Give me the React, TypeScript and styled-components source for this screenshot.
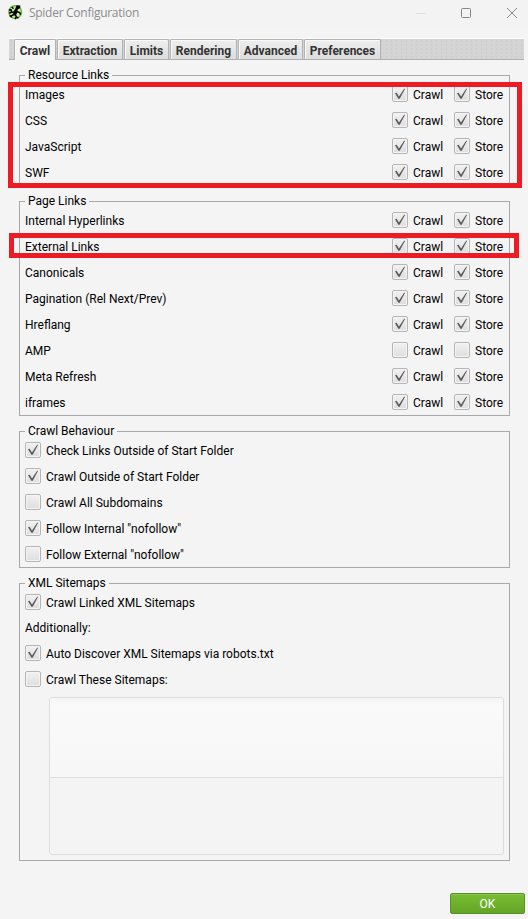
import React from 'react';
import styled, { createGlobalStyle } from 'styled-components';

const GlobalStyle = createGlobalStyle`
  * { box-sizing: border-box; }
  body { margin: 0; background: #f4f4f4; overflow: hidden; }
`;

const Window = styled.div`
  position: relative;
  width: 528px;
  height: 919px;
  display: flex;
  flex-direction: column;
  background: #f4f4f4;
  color: #000;
  font: 12px/14px Roboto, 'Liberation Sans', sans-serif;
  white-space: nowrap;
`;

const TitleBar = styled.header`
  display: flex;
  align-items: center;
  height: 26px;
  padding-left: 7px;
  background: #f3f3f3;
`;

const Title = styled.div`
  flex: 1;
  margin-left: 6px;
  color: #8c8c8c;
  font: 12px/16px 'Open Sans', 'Noto Sans', sans-serif;
  letter-spacing: -0.28px;
`;

const TabStrip = styled.nav`
  display: flex;
  align-items: flex-end;
  gap: 1px;
  height: 22px;
  margin: 12px 4px 0 9px;
  padding-left: 5px;
  border-top: 1px solid #fcfcfc;
  border-bottom: 1px solid #b0b0b0;
  background: radial-gradient(circle, #cccccc 0.5px, transparent 1px) 0 0 / 5px 4px, #d4d4d4;
`;

const Tab = styled.div<{ $width: number; $active?: boolean }>`
  width: ${(p) => p.$width}px;
  height: ${(p) => (p.$active ? 21 : 20)}px;
  margin-bottom: ${(p) => (p.$active ? -1 : 0)}px;
  padding-top: ${(p) => (p.$active ? 1 : 2)}px;
  display: flex;
  align-items: center;
  justify-content: center;
  border: 1px solid #b2b2b2;
  border-bottom: 0;
  border-radius: 2px 2px 0 0;
  box-shadow: inset 1px 1px #fafafa;
  background: ${(p) => (p.$active ? '#f5f5f5' : 'linear-gradient(#eeeeee, #dddddd)')};
  color: #333;
  font-weight: 700;
`;

const Content = styled.main`
  display: flex;
  flex-direction: column;
  gap: 15px;
  margin: 15px 18px 0 19px;
`;

const Group = styled.section<{ $height?: number }>`
  height: ${(p) => (p.$height ? `${p.$height}px` : 'auto')};
  padding: 0 5px;
  border: 1px solid #a9a9a9;
`;

const Legend = styled.h2`
  width: max-content;
  height: 14px;
  margin: -8px 0 -1px;
  padding: 0 3px;
  background: #f4f4f4;
  font: inherit;
`;

const Row = styled.div<{ $height?: number }>`
  display: flex;
  align-items: center;
  height: ${(p) => p.$height ?? 26}px;
`;

const RowLabel = styled.span`
  flex: 1;
  padding-top: 2px;
`;

const CheckLabel = styled.label<{ $width?: number }>`
  display: flex;
  align-items: center;
  gap: 5px;
  width: ${(p) => (p.$width ? `${p.$width}px` : 'auto')};
`;

const CheckText = styled.span`
  padding-top: 2px;
`;

const Box = styled.span`
  display: flex;
  width: 16px;
  height: 16px;
  border: 1px solid #b5b5b5;
  border-radius: 2px;
  box-shadow: inset 0 0 0 1px #f4f4f4;
  background: linear-gradient(#f1f1f1, #dedede);
`;

const SitemapList = styled.div`
  height: 158px;
  margin: 5px 0 0 24px;
  border: 1px solid #dddddd;
  border-radius: 3px;
  overflow: hidden;
`;

const SitemapEntries = styled.div`
  height: 80px;
  border-bottom: 1px solid #dedede;
  background: linear-gradient(#f5f5f5, #fafafa 8px, #f7f7f7);
`;

const Footer = styled.footer`
  display: flex;
  justify-content: flex-end;
  margin: 32px 3px 0 0;
`;

const OkButton = styled.button`
  width: 75px;
  height: 21px;
  padding: 0;
  border: 1px solid #589126;
  border-radius: 2px;
  box-shadow: inset 0 1px #8ac450;
  background: linear-gradient(#78bd33, #65a526);
  color: #fff;
  font: 12px/14px Roboto, sans-serif;
`;

const Highlight = styled.div<{ $left: number; $top: number; $width: number; $height: number }>`
  position: absolute;
  left: ${(p) => p.$left}px;
  top: ${(p) => p.$top}px;
  width: ${(p) => p.$width}px;
  height: ${(p) => p.$height}px;
  border: 5px solid #ed1c24;
  pointer-events: none;
`;

function Logo() {
  return (
    <svg width="16" height="18" viewBox="0 0 16 18" fill="none">
      <circle cx="8.2" cy="8" r="6.3" fill="#cdeab8" stroke="#67b82e" strokeWidth="1.5" />
      <path d="M8.5 4.2 9.5 1.3 13.3 1.5 13.2 4 10.8 5.5 10 9.2 8.3 11.8 6 11 6.3 8Z" fill="#050505" />
      <path d="M7 8.2 4.8 8.2 4 5.8 1.8 6M4.8 8 2.2 9.2M6.5 4.8 4.8 3M10 7.8 12.8 8.5 13.5 10.8M8.5 10.5 9.3 13.2 8 15.2M9.2 13 11.5 14M6.7 10.5 4.4 11.8 4.2 13.5M4.5 11.8 2.5 12" stroke="#050505" strokeWidth="1.5" />
    </svg>
  );
}

function WindowControls() {
  return (
    <svg width="114" height="24" viewBox="0 0 114 24" fill="none">
      <path d="M2 12.5H12" stroke="#dedede" />
      <rect x="47.5" y="7.5" width="9" height="9" rx="1" stroke="#858585" />
      <path d="M93 7 103 17M103 7 93 17" stroke="#8b8b8b" />
    </svg>
  );
}

function Check({ on, label, width }: { on: boolean; label: string; width?: number }) {
  return (
    <CheckLabel $width={width}>
      <Box>
        {on && (
          <svg width="14" height="14" viewBox="0 0 14 14" fill="none">
            <path d="M2 6.3 3.6 5.7 6 9.5 11.3 1.6 12 2 6.7 11.7H5.4Z" fill="#5a5a5a" />
          </svg>
        )}
      </Box>
      <CheckText>{label}</CheckText>
    </CheckLabel>
  );
}

function LinkRow({ name, on = true }: { name: string; on?: boolean }) {
  return (
    <Row>
      <RowLabel>{name}</RowLabel>
      <Check on={on} label="Crawl" width={62} />
      <Check on={on} label="Store" width={50} />
    </Row>
  );
}

const tabs: [string, number][] = [
  ['Crawl', 42],
  ['Extraction', 66],
  ['Limits', 45],
  ['Rendering', 67],
  ['Advanced', 65],
  ['Preferences', 77],
];

const resources = ['Images', 'CSS', 'JavaScript', 'SWF'];

const pageLinks = [
  'Internal Hyperlinks',
  'External Links',
  'Canonicals',
  'Pagination (Rel Next/Prev)',
  'Hreflang',
  'AMP',
  'Meta Refresh',
  'iframes',
];

const behaviours: [string, boolean][] = [
  ['Check Links Outside of Start Folder', true],
  ['Crawl Outside of Start Folder', true],
  ['Crawl All Subdomains', false],
  ['Follow Internal "nofollow"', true],
  ['Follow External "nofollow"', false],
];

export default function App() {
  return (
    <>
      <GlobalStyle />
      <Window>
        <TitleBar>
          <Logo />
          <Title>Spider Configuration</Title>
          <WindowControls />
        </TitleBar>
        <TabStrip>
          {tabs.map(([name, width], i) => (
            <Tab key={name} $width={width} $active={i === 0}>{name}</Tab>
          ))}
        </TabStrip>
        <Content>
          <Group $height={111}>
            <Legend>Resource Links</Legend>
            {resources.map((name) => <LinkRow key={name} name={name} />)}
          </Group>
          <Group $height={215}>
            <Legend>Page Links</Legend>
            {pageLinks.map((name) => <LinkRow key={name} name={name} on={name !== 'AMP'} />)}
          </Group>
          <Group $height={137}>
            <Legend>Crawl Behaviour</Legend>
            {behaviours.map(([name, on]) => <Row key={name}><Check on={on} label={name} /></Row>)}
          </Group>
          <Group $height={278}>
            <Legend>XML Sitemaps</Legend>
            <Row><Check on label="Crawl Linked XML Sitemaps" /></Row>
            <Row $height={25}>Additionally:</Row>
            <Row><Check on label="Auto Discover XML Sitemaps via robots.txt" /></Row>
            <Row><Check on={false} label="Crawl These Sitemaps:" /></Row>
            <SitemapList><SitemapEntries /></SitemapList>
          </Group>
        </Content>
        <Footer><OkButton>OK</OkButton></Footer>
        <Highlight $left={8} $top={82} $width={514} $height={106} />
        <Highlight $left={9} $top={233} $width={510} $height={25} />
      </Window>
    </>
  );
}
